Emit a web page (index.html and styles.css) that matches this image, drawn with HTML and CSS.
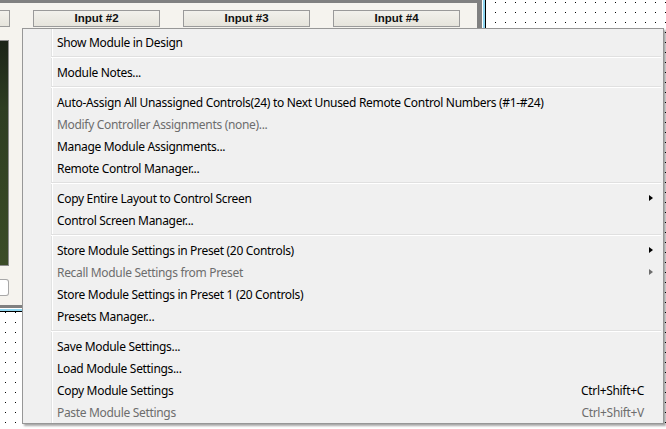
FILE: index.html
```html
<!DOCTYPE html>
<html lang="en">
<head>
    <meta charset="UTF-8">
    <meta name="viewport" content="width=device-width, initial-scale=1.0">
    <title>Module Context Menu</title>
    <link rel="stylesheet" href="styles.css">
</head>
<body>
    <div class="module">
        <div class="inputs">
            <div class="input-btn"></div>
            <div class="input-btn">Input #2</div>
            <div class="input-btn">Input #3</div>
            <div class="input-btn">Input #4</div>
        </div>
        <div class="display"></div>
        <div class="field"></div>
    </div>

    <div class="menu">
        <div class="item"><span class="label">Show Module in Design</span><span class="key"></span><span class="sub"></span></div>
        <div class="sep"></div>
        <div class="item"><span class="label">Module Notes...</span><span class="key"></span><span class="sub"></span></div>
        <div class="sep"></div>
        <div class="item"><span class="label">Auto-Assign All Unassigned Controls(24) to Next Unused Remote Control Numbers (#1-#24)</span><span class="key"></span><span class="sub"></span></div>
        <div class="item disabled"><span class="label">Modify Controller Assignments (none)...</span><span class="key"></span><span class="sub"></span></div>
        <div class="item"><span class="label">Manage Module Assignments...</span><span class="key"></span><span class="sub"></span></div>
        <div class="item"><span class="label">Remote Control Manager...</span><span class="key"></span><span class="sub"></span></div>
        <div class="sep"></div>
        <div class="item"><span class="label">Copy Entire Layout to Control Screen</span><span class="key"></span><span class="sub"><i class="arrow"></i></span></div>
        <div class="item"><span class="label">Control Screen Manager...</span><span class="key"></span><span class="sub"></span></div>
        <div class="sep"></div>
        <div class="item"><span class="label">Store Module Settings in Preset (20 Controls)</span><span class="key"></span><span class="sub"><i class="arrow"></i></span></div>
        <div class="item disabled"><span class="label">Recall Module Settings from Preset</span><span class="key"></span><span class="sub"><i class="arrow"></i></span></div>
        <div class="item"><span class="label">Store Module Settings in Preset 1 (20 Controls)</span><span class="key"></span><span class="sub"></span></div>
        <div class="item"><span class="label">Presets Manager...</span><span class="key"></span><span class="sub"></span></div>
        <div class="sep"></div>
        <div class="item"><span class="label">Save Module Settings...</span><span class="key"></span><span class="sub"></span></div>
        <div class="item"><span class="label">Load Module Settings...</span><span class="key"></span><span class="sub"></span></div>
        <div class="item"><span class="label">Copy Module Settings</span><span class="key">Ctrl+Shift+C</span><span class="sub"></span></div>
        <div class="item disabled"><span class="label">Paste Module Settings</span><span class="key">Ctrl+Shift+V</span><span class="sub"></span></div>
    </div>
</body>
</html>
```

FILE: styles.css
```css
html, body {
    margin: 0;
    height: 100%;
    overflow: hidden;
}

/* design canvas: 1px black dots on a 10px grid */
body {
    background-color: #fff;
    background-image:
        linear-gradient(to right, transparent 1px, #fff 1px),
        linear-gradient(to bottom, #000 1px, transparent 1px);
    background-size: 10px 10px;
    background-position: 5px 2px;
    font-family: "Noto Sans", "Open Sans", sans-serif;
}

.module {
    width: 477px;
    height: 302px;
    background: #f5f3ee;
    border-top: 3px solid #808080;
    border-right: 5px solid #808080;
    border-bottom: 3px solid #808080;
    /* selection outline */
    box-shadow: 0 0 0 1px #fff, 0 0 0 3px #8fd6f0, 0 0 0 4px #000;
    box-sizing: content-box;
    overflow: hidden;
}

.inputs {
    display: flex;
    gap: 23px;
    margin: 7px 0 0 -117px;
}

.input-btn {
    flex: 0 0 auto;
    width: 125px;
    height: 15px;
    border: 1px solid #9a9a9a;
    background: linear-gradient(#f2f1ec, #e6e4dc);
    font: bold 11.5px/15px "Liberation Sans", Arial, sans-serif;
    color: #111;
    text-align: center;
}

.display {
    width: 8px;
    height: 224px;
    margin-top: 13px;
    border: 1px solid #8c8c8c;
    border-left: none;
    background: linear-gradient(#1b2418, #2e3d22 30%, #3b4c27);
}

.field {
    width: 8px;
    height: 15px;
    margin-top: 13px;
    border: 1px solid #a8a8a8;
    border-left: none;
    border-radius: 0 3px 3px 0;
    background: #fff;
}

/* context menu */
.menu {
    position: absolute;
    left: 22px;
    top: 28px;
    width: 640px;
    padding: 2px 0 0;
    border: 1px solid #979797;
    background:
        linear-gradient(to right, transparent 28px, #e2e3e3 28px, #e2e3e3 29px, #fff 29px, #fff 30px, transparent 30px),
        #f0f0f0;
    box-shadow: 2px 2px 2px rgba(0, 0, 0, 0.35);
    font-size: 12px;
    letter-spacing: -0.32px;
    color: #000;
}

.item {
    display: flex;
    align-items: center;
    height: 22px;
    padding-left: 34px;
    white-space: nowrap;
}

.item .label {
    flex: 1;
}

.item .sub {
    display: flex;
    align-items: center;
    width: 19px;
    height: 100%;
}

.item.disabled {
    color: #6d6d6d;
}

.arrow {
    margin-left: 5px;
    width: 0;
    height: 0;
    border-top: 3.5px solid transparent;
    border-bottom: 3.5px solid transparent;
    border-left: 4px solid #000;
}

.disabled .arrow {
    border-left-color: #6d6d6d;
}

.sep {
    height: 1px;
    margin: 3px 2px 3px 28px;
    border-top: 1px solid #e0e0e0;
    background: #fff;
}
```
